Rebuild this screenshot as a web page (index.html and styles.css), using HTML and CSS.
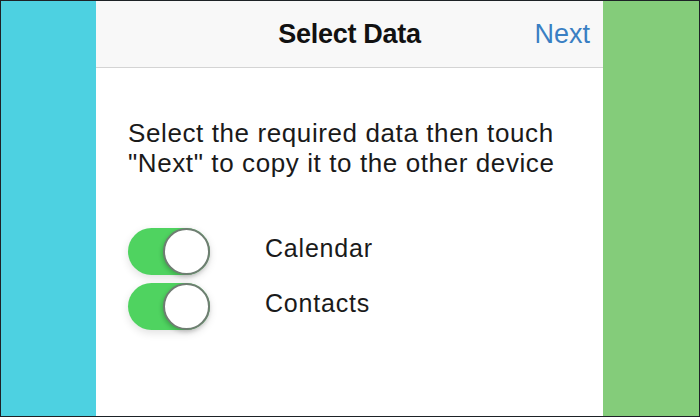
FILE: index.html
```html
<!DOCTYPE html>
<html>
<head>
<meta charset="utf-8">
<link rel="stylesheet" href="styles.css">
</head>
<body>
<div class="frame">
  <div class="side side-blue"></div>
  <div class="phone">
    <div class="navbar">
      <div class="title">Select Data</div>
      <div class="next">Next</div>
    </div>
    <div class="content">
      <p class="intro">Select the required data then touch<br>"Next" to copy it to the other device</p>
      <div class="list">
        <div class="row">
          <div class="toggle"><div class="knob"></div></div>
          <div class="label">Calendar</div>
        </div>
        <div class="row">
          <div class="toggle"><div class="knob"></div></div>
          <div class="label">Contacts</div>
        </div>
      </div>
    </div>
  </div>
  <div class="side side-green"></div>
</div>
</body>
</html>
```
FILE: styles.css
```css
* { box-sizing: border-box; }
html, body { margin: 0; padding: 0; }
body { width: 700px; height: 417px; overflow: hidden; font-family: "Liberation Sans", Arial, sans-serif; }
.frame {
  width: 700px; height: 417px;
  border: 1px solid #1d2226;
  display: flex;
}
.side { width: 95px; flex: none; }
.side-blue { background: #4dd1e1; }
.side-green { background: #84cc7a; width: 96px; }
.phone { flex: 1; background: #fff; display: flex; flex-direction: column; }
.navbar {
  height: 67px;
  background: #f8f8f8;
  border-bottom: 1px solid #d4d4d4;
  position: relative;
  display: flex; align-items: center; justify-content: center;
}
.title { font-size: 27px; font-weight: bold; color: #111; letter-spacing: -0.3px; }
.next {
  position: absolute; right: 13px; top: 50%; transform: translateY(-50%);
  font-size: 27px; color: #3a7fc3;
}
.content { padding: 50px 0 0 32px; }
.intro { margin: 0; font-size: 26px; line-height: 30px; color: #1a1a1a; letter-spacing: 0.6px; }
.list { margin-top: 49px; display: flex; flex-direction: column; gap: 7px; }
.row { display: flex; align-items: center; height: 48px; }
.toggle {
  width: 82px; height: 47px; border-radius: 24px;
  background: #4fd360;
  position: relative;
  box-shadow: 0 3px 8px rgba(0,0,0,0.12);
}
.knob {
  position: absolute; right: 0; top: 0;
  width: 47px; height: 47px; border-radius: 50%;
  background: #fff;
  border: 2px solid #6f7d72;
  box-shadow: -1px 2px 4px rgba(0,0,0,0.2);
}
.label { margin-left: 55px; padding-bottom: 5px; font-size: 25px; color: #1a1a1a; letter-spacing: 0.8px; }
```
